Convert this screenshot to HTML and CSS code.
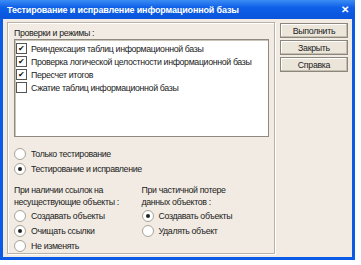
FILE: index.html
```html
<!DOCTYPE html>
<html lang="ru">
<head>
    <meta charset="UTF-8">
    <title>Тестирование и исправление информационной базы</title>
    <link rel="stylesheet" href="styles.css">
</head>
<body>
    <div class="window">
        <div class="titlebar">
            <span class="title">Тестирование и исправление информационной базы</span>
            <span class="close">&#x2715;</span>
        </div>
        <div class="content">
            <div class="group">
                <div class="label">Проверки и режимы :</div>
                <div class="listbox">
                    <div class="item"><span class="check on"></span>Реиндексация таблиц информационной базы</div>
                    <div class="item"><span class="check on"></span>Проверка логической целостности информационной базы</div>
                    <div class="item"><span class="check on"></span>Пересчет итогов</div>
                    <div class="item"><span class="check"></span>Сжатие таблиц информационной базы</div>
                </div>
                <div class="modes">
                    <div class="radio-row"><span class="radio"></span>Только тестирование</div>
                    <div class="radio-row"><span class="radio on"></span>Тестирование и исправление</div>
                </div>
                <div class="columns">
                    <div class="col">
                        <div class="col-label">При наличии ссылок на<br>несуществующие объекты :</div>
                        <div class="radio-row"><span class="radio"></span>Создавать объекты</div>
                        <div class="radio-row"><span class="radio on"></span>Очищать ссылки</div>
                        <div class="radio-row"><span class="radio"></span>Не изменять</div>
                    </div>
                    <div class="col">
                        <div class="col-label">При частичной потере<br>данных объектов :</div>
                        <div class="radio-row"><span class="radio on"></span>Создавать объекты</div>
                        <div class="radio-row"><span class="radio"></span>Удалять объект</div>
                    </div>
                </div>
            </div>
            <div class="buttons">
                <button class="btn">Выполнить</button>
                <button class="btn">Закрыть</button>
                <button class="btn">Справка</button>
            </div>
        </div>
    </div>
</body>
</html>
```
FILE: styles.css
```css
:root {
    --blue: #0B5BE6;
    --face: #F1EBE3;
    --text: #222;
}

body {
    margin: 0;
    background: white;
    font-family: 'Liberation Sans', Arial, sans-serif;
    font-size: 8.8px;
    letter-spacing: -0.35px;
    color: var(--text);
}

.window {
    width: 349px;
    height: 257px;
    background: var(--face);
    border: 3px solid var(--blue);
    border-top: none;
    display: flex;
    flex-direction: column;
}

.titlebar {
    flex: none;
    height: 19px;
    margin: 0 -3px;
    padding: 0 6px 0 7px;
    display: flex;
    align-items: center;
    justify-content: space-between;
    background: linear-gradient(to bottom, #3C8CF4, #0E5FE8 40%, #0A55DC);
    color: white;
    font-weight: bold;
    font-size: 9px;
    letter-spacing: -0.15px;
}

.close {
    font-size: 10px;
}

.content {
    flex: 1;
    min-height: 0;
    display: flex;
    gap: 5px;
    padding: 3px 4px 3px 4px;
}

.group {
    width: 268px;
    box-sizing: border-box;
    border: 1px solid #B9B2A6;
    box-shadow: inset 1px 1px 0 #fff, 1px 1px 0 #fff;
    padding: 4px 5px 0 6px;
}

.label {
    line-height: 12px;
}

.listbox {
    height: 98px;
    box-sizing: border-box;
    background: white;
    border: 1px solid #8E8A80;
    box-shadow: inset 1px 1px 0 #C9C4B8;
    padding: 2px 1px 0;
}

.item {
    height: 13px;
    display: flex;
    align-items: center;
    white-space: nowrap;
    overflow: hidden;
}

.check {
    width: 9px;
    height: 9px;
    border: 1px solid #555;
    margin-right: 4px;
    flex: none;
    display: flex;
    align-items: center;
    justify-content: center;
    font-size: 8px;
    letter-spacing: 0;
    line-height: 1;
}

.check.on::before {
    content: "\2714";
    color: #111;
}

.modes {
    margin-top: 9px;
}

.radio-row {
    height: 15px;
    display: flex;
    align-items: center;
    white-space: nowrap;
}

.radio {
    width: 10px;
    height: 10px;
    border: 1px solid #A8A398;
    border-radius: 50%;
    background: white;
    margin-right: 5px;
    flex: none;
    display: flex;
    align-items: center;
    justify-content: center;
}

.radio.on::before {
    content: "";
    width: 4px;
    height: 4px;
    border-radius: 50%;
    background: #222;
}

.columns {
    display: flex;
    margin-top: 8px;
}

.col {
    width: 130px;
    white-space: nowrap;
}

.col-label {
    line-height: 12px;
}

.buttons {
    display: flex;
    flex-direction: column;
    gap: 2px;
    padding-top: 1px;
}

.btn {
    width: 68px;
    height: 15px;
    padding: 0;
    font-family: inherit;
    font-size: 8.8px;
    letter-spacing: -0.3px;
    color: var(--text);
    background: #ECE6DA;
    border: 1px solid #8C877C;
    box-shadow: inset -1px -1px 0 #C5BFB2, inset 1px 1px 0 #fff;
}
```
